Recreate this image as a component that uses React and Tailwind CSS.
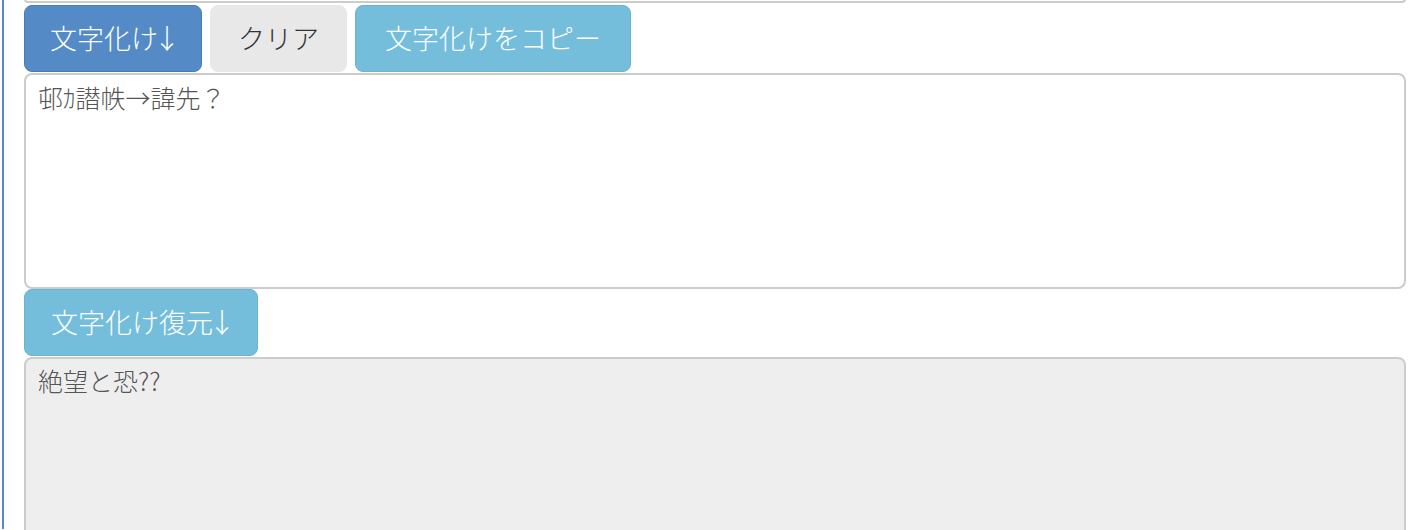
const Arrow = () => (
  <span className="inline-flex justify-center w-[18px] overflow-hidden align-top">↓</span>
);

export default function App() {
  return (
    <div
      className="w-[1418px] h-[530px] overflow-hidden bg-white"
      style={{ fontFamily: '"Noto Sans CJK JP", "Noto Sans", sans-serif' }}
    >
      <div className="ml-[2px] h-full border-l-2 border-[#5a86c2] pl-[20px] pr-[12px]">
        <div className="h-[4px] rounded-b-[8px] border-b-2 border-x-2 border-[#cccccc] -mt-[1px]" />
        <div className="flex gap-[8px] mt-[2px] font-light">
          <button className="h-[67px] px-[25px] rounded-[8px] border border-[#4a7bb4] bg-[#548bc6] text-white text-[27px]">
            文字化け<Arrow />
          </button>
          <button className="h-[67px] px-[27px] rounded-[8px] border border-[#e8e8e8] bg-[#e8e8e8] text-[#333333] text-[27px]">
            クリア
          </button>
          <button className="h-[67px] px-[29px] rounded-[8px] border border-[#6cb3d0] bg-[#75bedb] text-white text-[27px]">
            文字化けをコピー
          </button>
        </div>
        <textarea
          readOnly
          className="block w-full h-[216px] mt-[1px] resize-none rounded-[8px] border-2 border-[#cccccc] bg-white px-[12px] pt-[5px] text-[25px] leading-[34px] text-[#555555] outline-none font-light"
          value="邨ｶ譛帙→諱先？"
        />
        <button className="h-[67px] px-[26px] rounded-[8px] border border-[#6cb3d0] bg-[#75bedb] text-white text-[27px] font-light">
          文字化け復元<Arrow />
        </button>
        <textarea
          readOnly
          className="block w-full h-[216px] mt-[1px] resize-none rounded-[8px] border-2 border-[#cccccc] bg-[#eeeeee] px-[12px] pt-[4px] text-[25px] leading-[34px] text-[#555555] outline-none font-light"
          value="絶望と恐??"
        />
      </div>
    </div>
  );
}
